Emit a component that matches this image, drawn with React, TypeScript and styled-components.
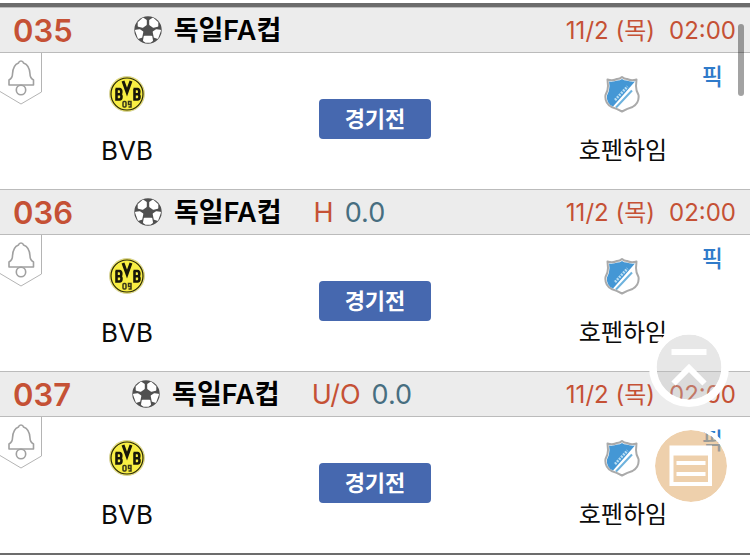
import React from "react";
import styled, { createGlobalStyle } from "styled-components";

const GlobalStyle = createGlobalStyle`
  * { box-sizing: border-box; }
  body {
    margin: 0;
    background: #fff;
    color: #0b0b0b;
    font-family: Inter, "Noto Sans CJK KR", sans-serif;
  }
`;

const Page = styled.main`
  padding-top: 3px;
  overflow: hidden;
`;

const MatchList = styled.section`
  border-top: 4px solid #6c6c6c;
  border-bottom: 4px solid #6c6c6c;
`;

const Match = styled.article``;

const MatchHeader = styled.header`
  display: flex;
  align-items: flex-start;
  height: 46px;
  padding: 0 14px 0 13px;
  background: #ececec;
  border-top: 1px solid #bbb;
  border-bottom: 1px solid #bbb;
  line-height: 46px;
  white-space: nowrap;
`;

const MatchNumber = styled.span`
  margin-right: 61px;
  color: #c55135;
  font-size: 31px;
  font-weight: 600;
`;

const League = styled.h2`
  display: flex;
  align-items: center;
  gap: 12px;
  margin: 0;
  color: #000;
  font-size: 27px;
  font-weight: 600;
`;

const BallIcon = styled.svg`
  width: 28px;
  height: 28px;
  margin-bottom: 2px;
`;

const Handicap = styled.span`
  display: flex;
  gap: 11px;
  margin-left: 32px;
  color: #476e80;
  font-size: 27px;
`;

const HandicapKind = styled.span`
  color: #c55135;
`;

const Kickoff = styled.time`
  display: flex;
  gap: 14px;
  margin-left: auto;
  color: #c55135;
  font-size: 24px;
`;

const MatchBody = styled.div`
  position: relative;
  display: grid;
  grid-template-columns: 1fr 242px 1fr;
  justify-items: center;
  height: 136px;
`;

const Team = styled.div`
  display: flex;
  flex-direction: column;
  align-items: center;
  gap: 18px;
  padding-top: 22px;
`;

const Crest = styled.svg`
  width: 38px;
  height: 38px;
`;

const TeamName = styled.span<{ $hangul?: boolean }>`
  font-size: ${({ $hangul }) => ($hangul ? 24 : 26)}px;
  line-height: 40px;
`;

const StatusButton = styled.button`
  align-self: start;
  width: 112px;
  height: 40px;
  margin-top: 46px;
  padding: 0 0 4px;
  border: 0;
  border-radius: 4px;
  background: #4668af;
  color: #fff;
  font: inherit;
  font-size: 22px;
  font-weight: 600;
`;

const AlarmButton = styled.button`
  position: absolute;
  top: 0;
  left: 0;
  padding: 0;
  border: 0;
  background: none;

  svg { display: block; }
`;

const PickLink = styled.a`
  position: absolute;
  top: 6px;
  right: 27px;
  color: #2f7bca;
  font-size: 23px;
  font-weight: 500;
  line-height: 36px;
  text-decoration: none;
`;

const ScrollThumb = styled.div`
  position: fixed;
  top: 24px;
  right: 6px;
  width: 6px;
  height: 72px;
  border-radius: 3px;
  background: rgba(0, 0, 0, 0.36);
`;

const FloatingActions = styled.nav`
  position: fixed;
  right: 19px;
  bottom: 49px;
  display: flex;
  flex-direction: column;
  align-items: flex-end;
  gap: 19px;
`;

const FloatingButton = styled.button`
  display: block;
  padding: 0;
  border: 0;
  background: none;

  svg { display: block; }
`;

function Ball() {
  return (
    <BallIcon viewBox="0 0 28 28" aria-hidden="true">
      <circle cx="14" cy="14" r="13.700" fill="#505050" />
      <g fill="#fff" stroke="#fff" strokeWidth="1.600" strokeLinejoin="round">
        <path d="M4.500 6.500 9 2.500l3 2v4L8.500 11l-4-1z" />
        <path d="M23.500 6.500 19 2.500l-3 2v4l3.500 2.500 4-1z" />
        <path d="m1.800 14.500 3.700-.5 3 2-1 5-3 1z" />
        <path d="m26.200 14.500-3.700-.5-3 2 1 5 3 1z" />
        <path d="M10.500 20.500h7l.700 4-2.200 1.500h-4l-2.200-1.500z" />
      </g>
    </BallIcon>
  );
}

function DortmundCrest() {
  return (
    <Crest viewBox="0 0 38 38" role="img" aria-label="BVB 09">
      <circle cx="19" cy="19" r="17.500" fill="#f8ee43" stroke="#d6d2a0" />
      <circle cx="19" cy="19" r="16" fill="none" stroke="#25240f" strokeWidth="1.200" />
      <g fill="none" stroke="#181709" strokeWidth="2.600">
        <path d="M8.500 14v10.500h3q2 0 2-2.700t-2-2.600h-3m3 0q1.800 0 1.800-2.500T11.500 14h-4" />
        <path d="m15 6 4 11 4-11" strokeWidth="3" />
        <path d="M26.500 14v10.500h3q2 0 2-2.700t-2-2.600h-3m3 0q1.800 0 1.800-2.500t-1.800-2.700h-4" />
      </g>
      <g fill="none" stroke="#3a391a" strokeWidth="1.500">
        <rect x="15" y="26.500" width="3" height="5.500" rx="1" />
        <path d="M20.500 32H23v-5.500h-2.500v3H23" />
      </g>
    </Crest>
  );
}

function HoffenheimCrest() {
  return (
    <Crest viewBox="0 0 38 38" role="img" aria-label="TSG 1899 Hoffenheim">
      <path
        d="M3.500 4.500Q9 6 13 4q3 0 5-2 2 2 5 2 4 2 9.500.500L32 11q0 5 2.500 9 1 8-6 12-5 1.500-10.500 4.500Q12.500 33.500 7.500 32q-7-4-6-12Q4 16 4 11z"
        fill="#fff"
        stroke="#aaa"
        strokeWidth="2"
        strokeLinejoin="round"
      />
      <path d="M5 6.500Q10 7 13.500 5.500 16 5.500 18 4q2 1.500 4.500 1.500Q26 7 31 6.500L9 31.500q-7-3-6-11Q5.500 16 5.500 11z" fill="#4497d5" />
      <path d="M12 32.500 28 15.500" stroke="#6db2dd" strokeWidth="2" />
      <path d="M11 25 23.500 11.500" stroke="#b7ddf3" strokeWidth="2.600" strokeDasharray="2 1" />
    </Crest>
  );
}

function AlarmIcon() {
  return (
    <svg width="43" height="54" viewBox="0 0 43 54" fill="none" aria-hidden="true">
      <path d="M41.500 0v39L21 51 0 38.500" stroke="#b4b4b4" />
      <path
        d="M18.500 10q.500-2 2.500-2t2.500 2q6 2 6.500 11 0 4 3.500 6v5H9v-5q3.500-2 3.500-6 .500-9 6-11z"
        stroke="#a0a0a0"
        strokeWidth="1.600"
        strokeLinejoin="round"
      />
      <circle cx="21" cy="37" r="4.700" stroke="#a0a0a0" strokeWidth="1.600" />
    </svg>
  );
}

function TopIcon() {
  return (
    <svg width="82" height="80" viewBox="0 0 82 80" fill="none" aria-hidden="true">
      <circle cx="40" cy="40" r="32.500" fill="#bdbdbd" fillOpacity="0.360" />
      <circle cx="40" cy="40" r="36.200" stroke="#fff" strokeWidth="7.600" />
      <path d="M22.500 25h35M24.500 56.500l15.500-15.500 15.500 15.500" stroke="#fff" strokeWidth="6" />
    </svg>
  );
}

function ListIcon() {
  return (
    <svg width="80" height="80" viewBox="0 0 80 80" fill="none" aria-hidden="true">
      <circle cx="40" cy="40" r="36" fill="#e2b174" fillOpacity="0.600" />
      <circle cx="40" cy="40" r="38" stroke="#fff" strokeWidth="4" />
      <path d="M18.500 19.500H61V60H18.500zM22.500 29.500V56H57V29.500z" fill="#fff" fillRule="evenodd" />
      <path d="M25.500 37h29M25.500 48h29" stroke="#fff" strokeWidth="4" />
    </svg>
  );
}

interface MatchInfo {
  number: string;
  kind?: string;
  line?: string;
}

const matches: MatchInfo[] = [
  { number: "035" },
  { number: "036", kind: "H", line: "0.0" },
  { number: "037", kind: "U/O", line: "0.0" },
];

function MatchItem({ number, kind, line }: MatchInfo) {
  return (
    <Match>
      <MatchHeader>
        <MatchNumber>{number}</MatchNumber>
        <League><Ball />독일FA컵</League>
        {kind && (
          <Handicap><HandicapKind>{kind}</HandicapKind><span>{line}</span></Handicap>
        )}
        <Kickoff><span>11/2 (목)</span><span>02:00</span></Kickoff>
      </MatchHeader>
      <MatchBody>
        <AlarmButton type="button" aria-label="알림"><AlarmIcon /></AlarmButton>
        <Team><DortmundCrest /><TeamName>BVB</TeamName></Team>
        <StatusButton type="button">경기전</StatusButton>
        <Team><HoffenheimCrest /><TeamName $hangul>호펜하임</TeamName></Team>
        <PickLink href="#pick">픽</PickLink>
      </MatchBody>
    </Match>
  );
}

export default function App() {
  return (
    <>
      <GlobalStyle />
      <Page>
        <MatchList>
          {matches.map((match) => <MatchItem key={match.number} {...match} />)}
        </MatchList>
      </Page>
      <ScrollThumb />
      <FloatingActions>
        <FloatingButton type="button" aria-label="맨 위로"><TopIcon /></FloatingButton>
        <FloatingButton type="button" aria-label="목록"><ListIcon /></FloatingButton>
      </FloatingActions>
    </>
  );
}
